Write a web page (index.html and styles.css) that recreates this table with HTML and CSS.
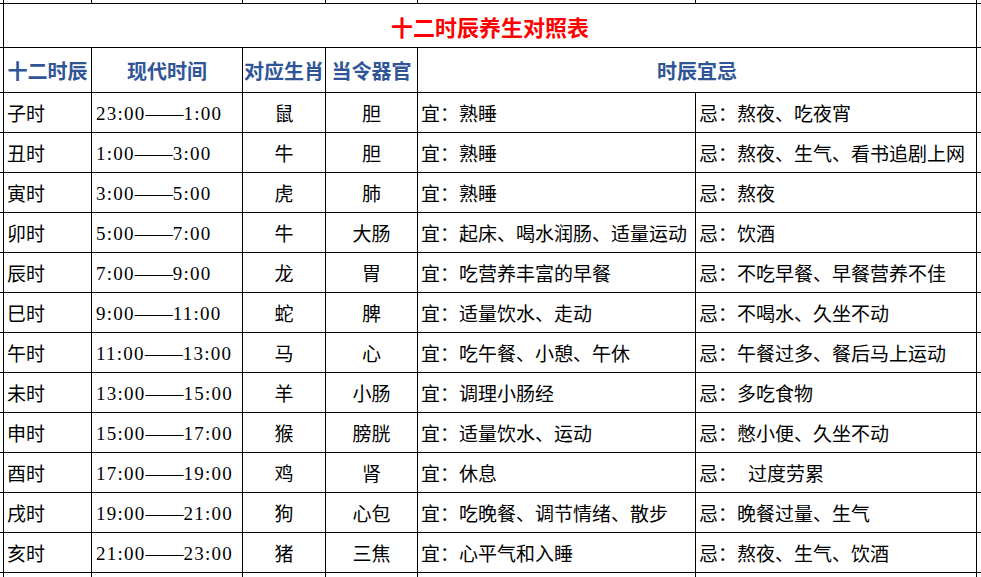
FILE: index.html
```html
<!DOCTYPE html>
<html lang="zh-CN">
<head>
<meta charset="utf-8">
<title>十二时辰养生对照表</title>
<link rel="stylesheet" href="styles.css">
</head>
<body>
<div class="sheet">
  <div class="grid">
    <div class="e"></div><div class="e"></div><div class="e"></div><div class="e"></div><div class="e"></div><div class="e"></div><div class="e"></div><div class="e"></div>

    <div class="e"></div><div class="title">十二时辰养生对照表</div><div class="e"></div>

    <div class="e"></div>
    <div class="hd">十二时辰</div><div class="hd">现代时间</div><div class="hd">对应生肖</div><div class="hd">当令器官</div><div class="hd span2">时辰宜忌</div>
    <div class="e"></div>

    <div class="e"></div><div class="c">子时</div><div class="c t">23:00<span class="d">——</span>1:00</div><div class="c m">鼠</div><div class="c m">胆</div><div class="c">宜：熟睡</div><div class="c">忌：熬夜、吃夜宵</div><div class="e"></div>
    <div class="e"></div><div class="c">丑时</div><div class="c t">1:00<span class="d">——</span>3:00</div><div class="c m">牛</div><div class="c m">胆</div><div class="c">宜：熟睡</div><div class="c">忌：熬夜、生气、看书追剧上网</div><div class="e"></div>
    <div class="e"></div><div class="c">寅时</div><div class="c t">3:00<span class="d">——</span>5:00</div><div class="c m">虎</div><div class="c m">肺</div><div class="c">宜：熟睡</div><div class="c">忌：熬夜</div><div class="e"></div>
    <div class="e"></div><div class="c">卯时</div><div class="c t">5:00<span class="d">——</span>7:00</div><div class="c m">牛</div><div class="c m">大肠</div><div class="c">宜：起床、喝水润肠、适量运动</div><div class="c">忌：饮酒</div><div class="e"></div>
    <div class="e"></div><div class="c">辰时</div><div class="c t">7:00<span class="d">——</span>9:00</div><div class="c m">龙</div><div class="c m">胃</div><div class="c">宜：吃营养丰富的早餐</div><div class="c">忌：不吃早餐、早餐营养不佳</div><div class="e"></div>
    <div class="e"></div><div class="c">巳时</div><div class="c t">9:00<span class="d">——</span>11:00</div><div class="c m">蛇</div><div class="c m">脾</div><div class="c">宜：适量饮水、走动</div><div class="c">忌：不喝水、久坐不动</div><div class="e"></div>
    <div class="e"></div><div class="c">午时</div><div class="c t">11:00<span class="d">——</span>13:00</div><div class="c m">马</div><div class="c m">心</div><div class="c">宜：吃午餐、小憩、午休</div><div class="c">忌：午餐过多、餐后马上运动</div><div class="e"></div>
    <div class="e"></div><div class="c">未时</div><div class="c t">13:00<span class="d">——</span>15:00</div><div class="c m">羊</div><div class="c m">小肠</div><div class="c">宜：调理小肠经</div><div class="c">忌：多吃食物</div><div class="e"></div>
    <div class="e"></div><div class="c">申时</div><div class="c t">15:00<span class="d">——</span>17:00</div><div class="c m">猴</div><div class="c m">膀胱</div><div class="c">宜：适量饮水、运动</div><div class="c">忌：憋小便、久坐不动</div><div class="e"></div>
    <div class="e"></div><div class="c">酉时</div><div class="c t">17:00<span class="d">——</span>19:00</div><div class="c m">鸡</div><div class="c m">肾</div><div class="c">宜：休息</div><div class="c">忌：<span class="gap"></span>过度劳累</div><div class="e"></div>
    <div class="e"></div><div class="c">戌时</div><div class="c t">19:00<span class="d">——</span>21:00</div><div class="c m">狗</div><div class="c m">心包</div><div class="c">宜：吃晚餐、调节情绪、散步</div><div class="c">忌：晚餐过量、生气</div><div class="e"></div>
    <div class="e"></div><div class="c">亥时</div><div class="c t">21:00<span class="d">——</span>23:00</div><div class="c m">猪</div><div class="c m">三焦</div><div class="c">宜：心平气和入睡</div><div class="c">忌：熬夜、生气、饮酒</div><div class="e"></div>

    <div class="e"></div><div class="e"></div><div class="e"></div><div class="e"></div><div class="e"></div><div class="e"></div><div class="e"></div><div class="e"></div>
  </div>
</div>
</body>
</html>
```

FILE: styles.css
```css
html, body {
  margin: 0;
  padding: 0;
  background: #fff;
}

.sheet {
  width: 981px;
  height: 577px;
  overflow: hidden;
  background: #fff;
}

.grid {
  display: grid;
  grid-template-columns: 3px 87px 150px 82px 91px 277px 280px 20px;
  grid-template-rows: 3px 43px 44px repeat(12, 39px) 20px;
  gap: 1px;
  background: #000;
  width: max-content;
  font-family: "Noto Sans CJK SC", "Noto Sans", sans-serif;
  font-size: 19px;
  color: #000;
}

.grid > div {
  background: #fff;
  display: flex;
  align-items: center;
  white-space: nowrap;
  overflow: hidden;
}

.title {
  grid-column: span 6;
  justify-content: center;
  color: #ff0000;
  font-size: 22px;
  font-weight: 700;
}

.hd {
  justify-content: center;
  color: #2f5597;
  font-size: 20px;
  font-weight: 700;
}

.span2 {
  grid-column: span 2;
}

.c {
  padding-left: 3px;
  line-height: 1;
}

.m {
  justify-content: center;
  padding-left: 0;
}

.t {
  font-family: "Liberation Serif", "Noto Sans CJK SC", serif;
  font-size: 19px;
  letter-spacing: 1.25px;
  padding-left: 4px;
  padding-top: 2px;
}

.d {
  letter-spacing: 0;
}

.gap {
  display: inline-block;
  width: 11px;
}
```
